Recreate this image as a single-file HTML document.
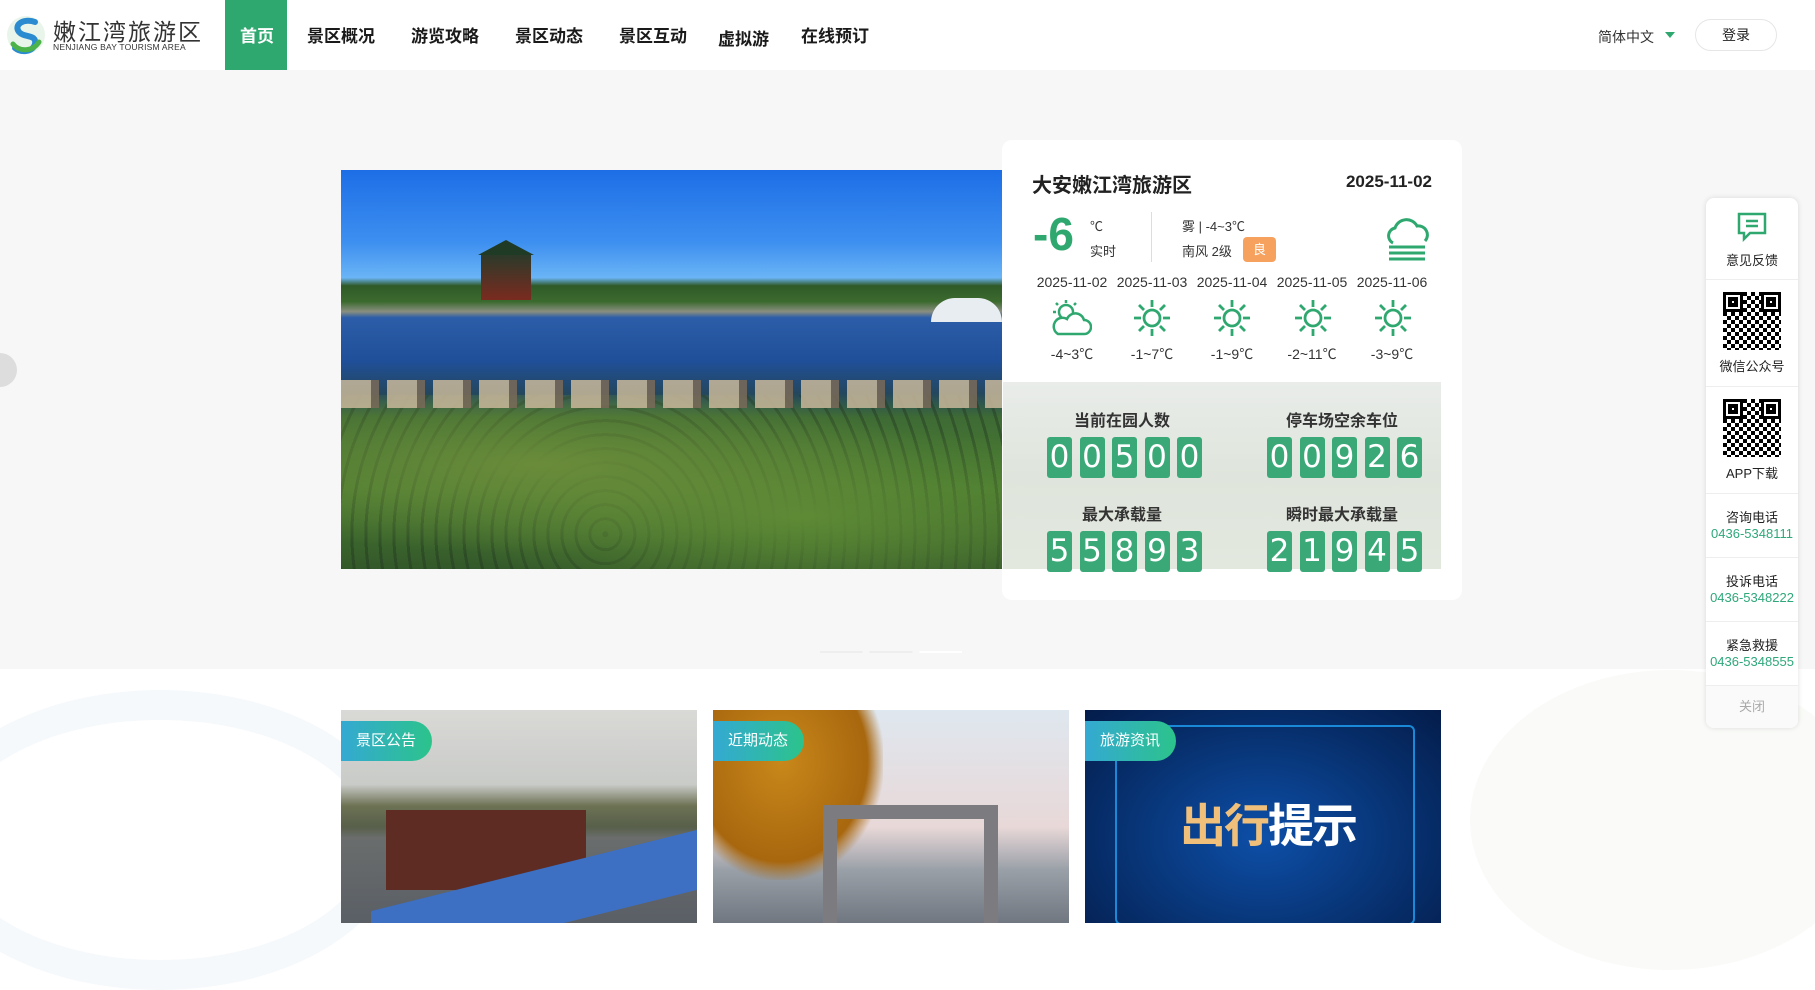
<!DOCTYPE html>
<html><head><meta charset="utf-8">
<style>
*{margin:0;padding:0;box-sizing:border-box}
body{width:1815px;height:923px;overflow:hidden;background:#fff;font-family:"Liberation Sans","Noto Sans CJK SC",sans-serif;position:relative;color:#222}
.abs{position:absolute}
.nav a{position:absolute;top:0;height:70px;line-height:74px;font-size:17px;font-weight:bold;color:#1a1a1a;text-decoration:none;white-space:nowrap}
.band{left:0;top:70px;width:1815px;height:599px;background:#f7f7f7}
.card{left:1002px;top:140px;width:460px;height:460px;background:#fff;border-radius:10px}
.dig{display:inline-block;width:25px;height:41px;margin-right:7.5px;background:#3aa877;color:#fff;border-radius:3px;font-size:31px;line-height:41px;text-align:center;font-family:"DejaVu Sans",sans-serif}
.lbl{font-size:16px;font-weight:bold;color:#333;text-align:center}
.side{left:1706px;top:198px;width:92px;height:530px;background:#fff;border-radius:8px;box-shadow:0 0 6px rgba(0,0,0,.12)}
.si{border-bottom:1px solid #eee;text-align:center;font-size:13px;color:#222}
.ph{color:#2ea87a;font-size:13px}
.qr{width:58px;height:58px;margin:0 auto;position:relative;background-image:repeating-conic-gradient(#000 0 25%,#fff 0 50%);background-size:8px 8px}
.qr:before,.qr:after{content:"";position:absolute;width:14px;height:14px;border:3px solid #000;background:#fff;box-shadow:inset 0 0 0 2px #fff,inset 0 0 0 6px #000}
.qr:before{left:0;top:0}.qr:after{right:0;top:0}
.pill{position:absolute;left:0;top:11px;height:40px;padding:0 16px 0 15px;border-radius:0 20px 20px 0;background:linear-gradient(90deg,#34a9d3,#2cc38b);color:#fff;font-size:15px;line-height:40px}
.t{font-size:14px;color:#333;width:80px;text-align:center}
</style></head><body>
<svg class="abs" style="left:5px;top:14px" width="42" height="42" viewBox="0 0 42 42">
<circle cx="21" cy="21" r="19" fill="#e9f5ea"/>
<path d="M30 8C20 4 8 10 14 18c5 6 18 2 16 12-2 8-14 9-20 4" fill="none" stroke="#2a8bd0" stroke-width="6" stroke-linecap="round"/>
<path d="M8 30c6 8 20 8 26-2" fill="none" stroke="#4bb34a" stroke-width="5" stroke-linecap="round"/>
</svg>
<div class="abs" style="left:53px;top:13px;font-size:23px;color:#333;letter-spacing:2px">嫩江湾旅游区</div>
<div class="abs" style="left:53px;top:42px;font-size:8.5px;color:#333;letter-spacing:.2px">NENJIANG BAY TOURISM AREA</div>
<div class="abs" style="left:225px;top:0;width:62px;height:70px;background:#2ea86f"></div>
<div class="nav">
<a style="left:240px;color:#fff">首页</a>
<a style="left:307px">景区概况</a>
<a style="left:411px">游览攻略</a>
<a style="left:515px">景区动态</a>
<a style="left:619px">景区互动</a>
<a style="left:718px;top:3px">虚拟游</a>
<a style="left:801px">在线预订</a>
</div>
<div class="abs" style="left:1598px;top:27px;font-size:14px;color:#333">简体中文</div>
<div class="abs" style="left:1665px;top:32px;width:0;height:0;border-left:5px solid transparent;border-right:5px solid transparent;border-top:6px solid #2ea86f"></div>
<div class="abs" style="left:1695px;top:19px;width:82px;height:32px;border:1px solid #e6e6e6;border-radius:16px;text-align:center;line-height:30px;font-size:14px;color:#222">登录</div>

<div class="abs band"></div>
<div class="abs" style="left:-17px;top:353px;width:34px;height:34px;border-radius:50%;background:#ddd"></div>
<div class="abs" style="left:341px;top:170px;width:661px;height:399px;overflow:hidden;background:linear-gradient(180deg,#1d6ee6 0%,#3d8ff0 18%,#6ab4f6 27%,#2f5a28 29%,#3b6a2e 33%,#8a8f80 35.5%,#2c5da8 37%,#1f4f98 48%,#24475e 56%,#3e6b34 62%,#4a7c31 80%,#33582a 100%)">
<div class="abs" style="left:0;top:225px;width:661px;height:174px;background:radial-gradient(ellipse at 30% 40%,#6a8c3a,transparent 60%),radial-gradient(ellipse at 70% 70%,#5d8a35,transparent 55%),repeating-radial-gradient(circle at 40% 80%,rgba(30,50,30,.4) 0 3px,transparent 3px 14px)"></div>
<div class="abs" style="left:0;top:210px;width:661px;height:28px;background:repeating-linear-gradient(90deg,#c9b89a 0 30px,#7a6a58 30px 38px,transparent 38px 46px);opacity:.85"></div>
<div class="abs" style="left:130px;top:70px;width:70px;height:15px;background:#1f3a25;clip-path:polygon(10% 100%,50% 0,90% 100%)"></div>
<div class="abs" style="left:140px;top:85px;width:50px;height:45px;background:linear-gradient(#2c3a2a,#7a2b1f)"></div>
<div class="abs" style="left:590px;top:128px;width:71px;height:24px;background:#e8edf2;border-radius:30px 30px 0 0"></div>
</div>
<div class="abs card"></div>
<div class="abs" style="left:1032px;top:169px;font-size:20px;font-weight:bold;color:#222">大安嫩江湾旅游区</div>
<div class="abs" style="left:1339px;top:172px;width:93px;text-align:right;font-size:17px;font-weight:bold;color:#222">2025-11-02</div>
<div class="abs" style="left:1033px;top:209px;font-size:46px;font-weight:bold;color:#2ea86f;line-height:50px">-6</div>
<div class="abs" style="left:1090px;top:216px;font-size:13px;color:#333">℃</div>
<div class="abs" style="left:1090px;top:241px;font-size:13px;color:#333">实时</div>
<div class="abs" style="left:1151px;top:212px;width:1px;height:50px;background:#ddd"></div>
<div class="abs" style="left:1182px;top:216px;font-size:13px;color:#333">雾 | -4~3℃</div>
<div class="abs" style="left:1182px;top:241px;font-size:13px;color:#333">南风 2级</div>
<div class="abs" style="left:1243px;top:237px;width:33px;height:25px;background:#f7a15f;border-radius:4px;color:#fff;font-size:13px;text-align:center;line-height:25px">良</div>
<svg class="abs" style="left:1383px;top:215px" width="48" height="46" viewBox="0 0 48 46"><path d="M10 28a8 8 0 0 1 2-15 12 12 0 0 1 22-2 9 9 0 0 1 8 15" fill="none" stroke="#2ea86f" stroke-width="3"/><path d="M6 32h36M6 38h36M6 44h36" stroke="#2ea86f" stroke-width="3"/></svg>
<div class="abs t" style="left:1032px;top:274px">2025-11-02</div>
<div class="abs t" style="left:1112px;top:274px">2025-11-03</div>
<div class="abs t" style="left:1192px;top:274px">2025-11-04</div>
<div class="abs t" style="left:1272px;top:274px">2025-11-05</div>
<div class="abs t" style="left:1352px;top:274px">2025-11-06</div>
<svg class="abs" style="left:1050px;top:298px" width="42" height="40" viewBox="0 0 42 40"><g stroke="#2ea86f" stroke-width="2.5" fill="none"><circle cx="16" cy="14" r="7"/><path d="M16 2v3M6 5l2 2M26 5l-2 2M3 14h3"/><path d="M8 36h26a7 7 0 0 0 0-14 9 9 0 0 0-17-1 7 7 0 0 0-9 15z" fill="#fff"/></g></svg>
<svg class="abs" style="left:1132px;top:298px" width="40" height="40" viewBox="0 0 40 40"><g stroke="#2ea86f" stroke-width="2.8" fill="none"><circle cx="20" cy="20" r="8"/><path d="M20 2v7M20 31v7M2 20h7M31 20h7M7 7l5 5M28 28l5 5M33 7l-5 5M12 28l-5 5"/></g></svg>
<svg class="abs" style="left:1212px;top:298px" width="40" height="40" viewBox="0 0 40 40"><g stroke="#2ea86f" stroke-width="2.8" fill="none"><circle cx="20" cy="20" r="8"/><path d="M20 2v7M20 31v7M2 20h7M31 20h7M7 7l5 5M28 28l5 5M33 7l-5 5M12 28l-5 5"/></g></svg>
<svg class="abs" style="left:1293px;top:298px" width="40" height="40" viewBox="0 0 40 40"><g stroke="#2ea86f" stroke-width="2.8" fill="none"><circle cx="20" cy="20" r="8"/><path d="M20 2v7M20 31v7M2 20h7M31 20h7M7 7l5 5M28 28l5 5M33 7l-5 5M12 28l-5 5"/></g></svg>
<svg class="abs" style="left:1373px;top:298px" width="40" height="40" viewBox="0 0 40 40"><g stroke="#2ea86f" stroke-width="2.8" fill="none"><circle cx="20" cy="20" r="8"/><path d="M20 2v7M20 31v7M2 20h7M31 20h7M7 7l5 5M28 28l5 5M33 7l-5 5M12 28l-5 5"/></g></svg>
<div class="abs t" style="left:1032px;top:344px">-4~3℃</div>
<div class="abs t" style="left:1112px;top:344px">-1~7℃</div>
<div class="abs t" style="left:1192px;top:344px">-1~9℃</div>
<div class="abs t" style="left:1272px;top:344px">-2~11℃</div>
<div class="abs t" style="left:1352px;top:344px">-3~9℃</div>
<div class="abs" style="left:1003px;top:382px;width:438px;height:187px;background:linear-gradient(180deg,#e9ece9,#dfe5dc 50%,#e3e8df)"></div>
<div class="abs lbl" style="left:1047px;top:407px;width:150px">当前在园人数</div>
<div class="abs lbl" style="left:1267px;top:407px;width:150px">停车场空余车位</div>
<div class="abs lbl" style="left:1047px;top:501px;width:150px">最大承载量</div>
<div class="abs lbl" style="left:1267px;top:501px;width:150px">瞬时最大承载量</div>
<div class="abs" style="left:1047px;top:437px;width:170px;white-space:nowrap"><span class="dig">0</span><span class="dig">0</span><span class="dig">5</span><span class="dig">0</span><span class="dig">0</span></div>
<div class="abs" style="left:1267px;top:437px;width:170px;white-space:nowrap"><span class="dig">0</span><span class="dig">0</span><span class="dig">9</span><span class="dig">2</span><span class="dig">6</span></div>
<div class="abs" style="left:1047px;top:531px;width:170px;white-space:nowrap"><span class="dig">5</span><span class="dig">5</span><span class="dig">8</span><span class="dig">9</span><span class="dig">3</span></div>
<div class="abs" style="left:1267px;top:531px;width:170px;white-space:nowrap"><span class="dig">2</span><span class="dig">1</span><span class="dig">9</span><span class="dig">4</span><span class="dig">5</span></div>
<div class="abs" style="left:820px;top:651px;width:142px;height:2px;background:linear-gradient(90deg,#eee 0 30%,transparent 30% 35%,#eee 35% 65%,transparent 65% 70%,#fff 70%)"></div>
<div class="abs" style="left:-80px;top:690px;width:480px;height:300px;border-radius:50%;border:30px solid #f6f9fb"></div>
<div class="abs" style="left:1470px;top:670px;width:400px;height:300px;border-radius:50%;background:#fafbf8"></div>
<div class="abs" style="left:341px;top:710px;width:356px;height:213px;overflow:hidden;background:linear-gradient(180deg,#d9d9d6 0%,#c9cbc8 35%,#6d7254 45%,#585f4a 55%,#6a6d6c 60%,#5a5f66 100%)">
<div class="abs" style="left:45px;top:100px;width:200px;height:80px;background:#5e2c22"></div>
<div class="abs" style="left:30px;top:160px;width:330px;height:60px;background:#3d6fc2;transform:skewY(-14deg)"></div>
<div class="pill">景区公告</div></div>
<div class="abs" style="left:713px;top:710px;width:356px;height:213px;overflow:hidden;background:linear-gradient(180deg,#dfe7ef,#e8d8d8 55%,#9aa0a8 75%,#707780)">
<div class="abs" style="left:0;top:0;width:170px;height:170px;background:radial-gradient(ellipse at 40% 30%,#c9881a,#a8670e 60%,transparent 72%)"></div>
<div class="abs" style="left:110px;top:95px;width:175px;height:118px;border:14px solid #7c7c80;border-bottom:none"></div>
<div class="pill">近期动态</div></div>
<div class="abs" style="left:1085px;top:710px;width:356px;height:213px;overflow:hidden;background:radial-gradient(ellipse at 50% 60%,#0d4fa8,#07306e 60%,#041c4a)">
<div class="abs" style="left:30px;top:15px;width:300px;height:200px;border:2px solid #1a8ad8;border-radius:6px"></div>
<div class="abs" style="left:95px;top:80px;font-size:46px;font-weight:bold;color:#f0c07a;font-family:'Noto Sans CJK SC',sans-serif;letter-spacing:-2px">出行<span style="color:#fff">提示</span></div>
<div class="pill">旅游资讯</div></div>
<div class="abs side">
<div class="si" style="height:82px;padding-top:13px"><svg width="32" height="32" viewBox="0 0 32 32"><path d="M3 3h26v19H14l-6 6v-6H3z" fill="none" stroke="#2ea86f" stroke-width="2.5"/><path d="M10 10h12M10 15h12" stroke="#2ea86f" stroke-width="2.5"/></svg><div style="margin-top:4px">意见反馈</div></div>
<div class="si" style="height:107px;padding-top:12px"><div class="qr"></div><div style="margin-top:6px">微信公众号</div></div>
<div class="si" style="height:107px;padding-top:12px"><div class="qr"></div><div style="margin-top:6px">APP下载</div></div>
<div class="si" style="height:64px;padding-top:13px">咨询电话<div class="ph">0436-5348111</div></div>
<div class="si" style="height:64px;padding-top:13px">投诉电话<div class="ph">0436-5348222</div></div>
<div class="si" style="height:64px;padding-top:13px">紧急救援<div class="ph">0436-5348555</div></div>
<div style="height:42px;line-height:42px;text-align:center;color:#aaa;font-size:13px;background:#fafafa;border-radius:0 0 8px 8px">关闭</div>
</div>
</body></html>
